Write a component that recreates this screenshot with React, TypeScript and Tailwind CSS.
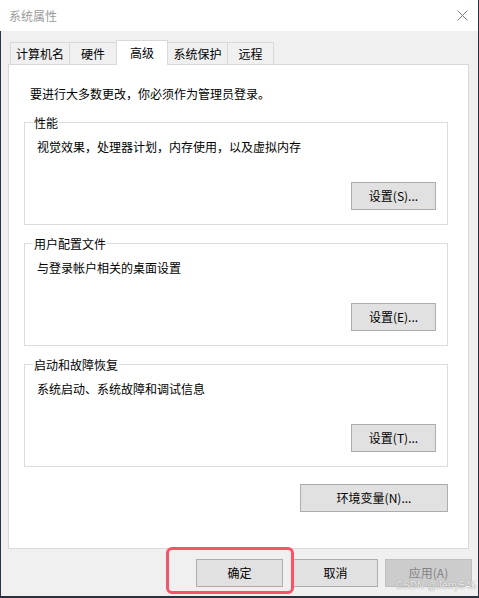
import React from 'react';

const font = "font-['Microsoft_YaHei','Noto_Sans_CJK_SC',sans-serif]";

const tabs = [
  { label: '计算机名', w: 'w-[59px]' },
  { label: '硬件', w: 'w-[47px]' },
  { label: '高级', w: 'w-[52px]', active: true },
  { label: '系统保护', w: 'w-[59px]' },
  { label: '远程', w: 'w-[47px]' },
];

const groups = [
  { title: '性能', text: '视觉效果，处理器计划，内存使用，以及虚拟内存', btn: '设置(S)...' },
  { title: '用户配置文件', text: '与登录帐户相关的桌面设置', btn: '设置(E)...' },
  { title: '启动和故障恢复', text: '系统启动、系统故障和调试信息', btn: '设置(T)...' },
];

function WinButton({ children, className = '' }: { children: React.ReactNode; className?: string }) {
  return (
    <div
      className={`h-[28px] flex items-center justify-center bg-[#e1e1e1] border border-[#adadad] text-[12px] text-black ${className}`}
    >
      {children}
    </div>
  );
}

export default function App() {
  return (
    <div className={`relative w-[479px] h-[598px] bg-[#27313f] overflow-hidden ${font}`}>
      <div className="w-[478px] h-[596px] flex flex-col">
        {/* Title bar */}
        <div className="h-[31px] bg-white flex items-center justify-between pl-[9px] pr-[9px]">
          <span className="text-[12px] text-[#9a9a9a]">系统属性</span>
          <svg width="11" height="11" viewBox="0 0 11 11" className="mr-[1px]">
            <path d="M0.5 0.5 L10.5 10.5 M10.5 0.5 L0.5 10.5" stroke="#7a7a7a" strokeWidth="1" fill="none" />
          </svg>
        </div>

        {/* Body */}
        <div className="flex-1 flex flex-col bg-[#f0f0f0] border-l border-[#2b3545]">
          {/* Tabs */}
          <div className="mt-[9px] pl-[9px] h-[24px] flex items-end relative z-10">
            {tabs.map((t, i) =>
              t.active ? (
                <div
                  key={t.label}
                  className={`${t.w} h-[25px] -mb-[1px] bg-white border-t border-l border-r border-[#d9d9d9] flex items-start justify-center pt-[3px] text-[12px] text-black`}
                >
                  {t.label}
                </div>
              ) : (
                <div
                  key={t.label}
                  className={`${t.w} h-[22px] bg-[#f0f0f0] border-t border-[#d9d9d9] flex items-center justify-center text-[12px] text-black ${
                    i > 0 && tabs[i - 1].active ? '' : 'border-l'
                  } ${i === tabs.length - 1 ? 'border-r' : ''}`}
                >
                  {t.label}
                </div>
              )
            )}
          </div>

          {/* Panel */}
          <div className="ml-[7px] w-[461px] h-[485px] bg-white border border-[#d9d9d9] flex flex-col">
            <p className="mt-[20px] pl-[21px] text-[12px] leading-[17px] text-black">
              要进行大多数更改，你必须作为管理员登录。
            </p>

            <div className="mt-[20px] ml-[15px] w-[424px] flex flex-col gap-[18px]">
              {groups.map(g => (
                <div key={g.title} className="relative h-[103px] border border-[#dcdcdc] flex flex-col pt-[15px] pl-[12px] pr-[11px]">
                  <span className="absolute -top-[9px] left-[8px] bg-white px-[1px] text-[12px] leading-[17px] text-black">
                    {g.title}
                  </span>
                  <p className="text-[12px] leading-[17px] text-black">{g.text}</p>
                  <div className="mt-[27px] flex justify-end">
                    <WinButton className="w-[85px]">{g.btn}</WinButton>
                  </div>
                </div>
              ))}
            </div>

            <div className="mt-[17px] ml-[15px] w-[424px] flex justify-end">
              <WinButton className="w-[148px]">环境变量(N)...</WinButton>
            </div>
          </div>

          {/* Dialog buttons */}
          <div className="mt-[10px] pl-[195px] flex">
            <WinButton className="w-[87px]">确定</WinButton>
            <WinButton className="w-[85px] ml-[10px]">取消</WinButton>
            <div className="w-[87px] ml-[7px] h-[28px] flex items-center justify-center bg-[#cccccc] border border-[#bfbfbf] text-[12px] text-[#838383]">
              应用(A)
            </div>
          </div>
        </div>
      </div>

      {/* Annotation highlight */}
      <div className="absolute left-[166px] top-[547px] w-[128px] h-[47px] border-[3px] border-[#fe5066] rounded-[6px]" />

      {/* Watermark */}
      <span className="absolute right-[3px] top-[579px] whitespace-nowrap text-[10px] leading-[13px] text-white/90 [text-shadow:0_0_1px_#666] font-['Liberation_Sans',sans-serif]">
        CSDN @Jerry545
      </span>
    </div>
  );
}
